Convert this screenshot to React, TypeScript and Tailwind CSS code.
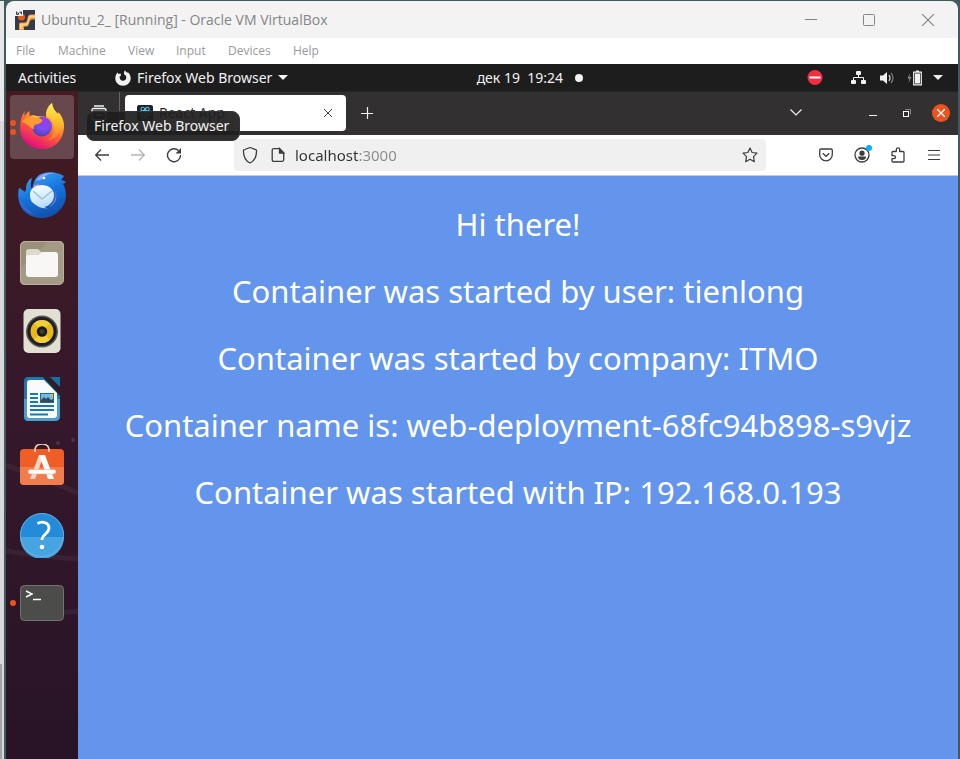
import type { ReactNode } from "react";

const menuItems = [
  { label: "File", width: "w-[42px]" },
  { label: "Machine", width: "w-[70px]" },
  { label: "View", width: "w-12" },
  { label: "Input", width: "w-[52px]" },
  { label: "Devices", width: "w-[65px]" },
  { label: "Help", width: "w-12" },
];

const messages = [
  "Hi there!",
  "Container was started by user: tienlong",
  "Container was started by company: ITMO",
  "Container name is: web-deployment-68fc94b898-s9vjz",
  "Container was started with IP: 192.168.0.193",
];

function IconButton({ label, className = "", children }: { label: string; className?: string; children: ReactNode }) {
  return (
    <button type="button" aria-label={label} className={`flex shrink-0 items-center justify-center ${className}`}>
      {children}
    </button>
  );
}

function VirtualBoxIcon() {
  return (
    <svg width="20" height="20" viewBox="0 0 20 20">
      <rect width="20" height="20" fill="#343a48" />
      <circle cx="6.500" cy="7" r="3.500" fill="#e65a1c" />
      <path d="M4 20V14q0-1.500 1.500-1.500H10q1.500 0 2-2l1-4q.500-2 2.500-2H20v5h-3q-1.500 0-2 1.500l-1.500 4q-.500 1.500-2 1.500H10q-1 0-1 1V20z" fill="#f29a3a" />
      <path d="M5 19v-4.500q0-1 1-1h4.500q1.500 0 2-2l1-4q.500-2 2-2H20v2h-3.500q-1.500 0-2 1.500l-1.500 5q-.500 1.500-2 1.500H9q-1.500 0-1.500 1.500V19z" fill="#ffd48a" />
      <rect width="8" height="6" fill="#f4f4f4" />
      <path d="M1.500 1.500v3h2v-1.500h-2M5 1.500v1.500h1.500M6.500 1.500v3" stroke="#444" fill="none" />
    </svg>
  );
}

function FirefoxSymbol() {
  return (
    <svg width="16" height="16" viewBox="0 0 16 16">
      <path d="M2.500 2.500 3.500 4l2-.5.5 2-1.500 1.200C4.500 9 6 10.800 8 10.800s3.300-1.300 3.300-3.200c0-1.300-.6-2.300-1.700-2.800C8.500 4 9 1.500 10 .3c.5 1.200 1.500 1.700 2.300 2.600l.4-1C14.500 3.500 15.700 5.500 15.700 8.200c0 4.300-3.400 7.500-7.700 7.500S.3 12.500.3 8.200c0-2.500 1-4.200 2.200-5.700z" fill="#f2f2f2" />
    </svg>
  );
}

function Caret() {
  return (
    <svg width="10" height="5" viewBox="0 0 10 5">
      <path d="M0 0h10L5 5z" fill="#f2f2f2" />
    </svg>
  );
}

function FirefoxLogo() {
  return (
    <svg width="48" height="48" viewBox="0 0 48 48">
      <defs>
        <linearGradient id="ffBody" x1="0.8" y1="0" x2="0.3" y2="1">
          <stop offset="0" stopColor="#fff04f" />
          <stop offset="0.3" stopColor="#ffb62e" />
          <stop offset="0.6" stopColor="#ff5a36" />
          <stop offset="0.95" stopColor="#e4117c" />
        </linearGradient>
        <radialGradient id="ffGlobe" cx="0.6" cy="0.25" r="0.8">
          <stop offset="0" stopColor="#a238e8" />
          <stop offset="0.5" stopColor="#7a4df0" />
          <stop offset="1" stopColor="#4c3fae" />
        </radialGradient>
        <linearGradient id="ffTail" x1="0" y1="0" x2="0" y2="1">
          <stop offset="0" stopColor="#fff25a" />
          <stop offset="0.5" stopColor="#ffc02c" />
          <stop offset="1" stopColor="#ff7a2a" />
        </linearGradient>
      </defs>
      <path d="M7 8c-1 3-.5 4-.5 5 1.500-2 3-4 5-5-.4 2 0 4 .5 5 2-.5 4-.3 6 0 4 0 8 0 10 1 0-6 2-10 6-14 .5 5 3 8 6 11l.5-2c4 5 6 10 5.500 16C45 38 36 46 24.500 46S3 38 2.200 27C1.800 20 3 13 7 8z" fill="url(#ffBody)" />
      <path d="M34 0c-3 2-6 6-6 12 5 3 8 7 8 13 0 6-3 9-6 12 8-1 13-7 14-14 .5-5-1-9-3-11-3-3-6.500-6-7-12z" fill="url(#ffTail)" opacity="0.85" />
      <circle cx="24" cy="23.500" r="10" fill="url(#ffGlobe)" />
      <path d="M3.500 19c4-5 9-7 15-6 2 0 3 3 6 4-.5 3-4 4-7 4.500-2 1-2 3-1.500 5C11 24 9 20 3.500 19z" fill="#ff9a2e" />
      <path d="M12.500 13c4-1 7 0 9 2-3-.5-5-1-9-2z" fill="#ffd23e" />
    </svg>
  );
}

function ThunderbirdLogo() {
  return (
    <svg width="48" height="48" viewBox="0 0 48 48">
      <defs>
        <linearGradient id="tbBody" x1="0.2" y1="0" x2="0.6" y2="1">
          <stop offset="0" stopColor="#3ba5f2" />
          <stop offset="0.5" stopColor="#1573dc" />
          <stop offset="1" stopColor="#1050ac" />
        </linearGradient>
        <linearGradient id="tbMail" x1="0" y1="0" x2="0.3" y2="1">
          <stop offset="0" stopColor="#ffffff" />
          <stop offset="1" stopColor="#b9dffa" />
        </linearGradient>
      </defs>
      <path d="M14 18c-2-3-1-7 0-11-4 2-6 6-6 11l-1 3c-2-1-3-3-6-4-1 4-1 8-.5 11C2 40 12 47 24 47s23-9 24-22c0-5-1-9-3-12 1-1 2-1 3-1-1-2-3-3-5-3 1-1 2-2 3-4-9-5-22-5-27 1-3 3-4 8-5 12z" fill="url(#tbBody)" />
      <path d="M18 10C21 3 30 1 38 2c-7 0-12 3-13 6z" fill="#9aa5ff" />
      <path d="M16 14c2 0 4-1 5-2l-1 4-5 3z" fill="#9f88e8" />
      <circle cx="26" cy="7" r="1.300" fill="#fff" />
      <path d="M12 24c0-7 6-10 12-10s12 4 12 10c0 7-5 11-10 12 2 1 3 1 4 1-5 1-10-1-12-3-4-2-6-5-6-10z" fill="url(#tbMail)" />
      <path d="m15 20 9 8 10-8" fill="none" stroke="#9fc0da" strokeWidth="1.600" />
      <path d="M37 20c2 7-1 12-6 16 7-3 9-10 6-16z" fill="#8b81e2" />
      <path d="M1 25c1 10 8 17 17 19C9 40 3 34 1 25z" fill="#6a62c8" />
    </svg>
  );
}

function FilesLogo() {
  return (
    <svg width="46" height="46" viewBox="0 0 46 46">
      <rect x="1" y="1" width="44" height="44" rx="5" fill="#999079" />
      <path d="M1 29 30 1h10c3 0 5 2 5 5v29c0 7-3 10-8 10H6c-3 0-5-2-5-5z" fill="#a49b86" />
      <rect x="1.500" y="1.500" width="43" height="43" rx="5" fill="none" stroke="#bab29d" />
      <path d="M7 12q0-3 3-3h8q2 0 3 2l2 2v9H7z" fill="#ded8cd" />
      <path d="M7 18q0-3 3-3h9q1 0 2-1l2-2h13q3 0 3 3v19q0 3-3 3H10q-3 0-3-3z" fill="#f8f7f6" />
    </svg>
  );
}

function RhythmboxLogo() {
  return (
    <svg width="40" height="46" viewBox="0 0 40 46">
      <rect x="1.500" y="1" width="37" height="44" rx="5" fill="#e2dfd3" />
      <circle cx="20" cy="23.500" r="16" fill="#58564f" />
      <circle cx="20" cy="23.500" r="14.500" fill="#1b1f2b" />
      <circle cx="20" cy="23.500" r="11.500" fill="#e8b818" />
      <path d="M20 23.500 12 15.200a11.500 11.500 0 0 1 16 0zM20 23.500l-8 8.300a11.500 11.500 0 0 0 16 0z" fill="#f8d94c" opacity="0.7" />
      <circle cx="20" cy="23.500" r="5.200" fill="#191919" />
      <circle cx="20" cy="23.500" r="2.500" fill="#3b3b3b" />
    </svg>
  );
}

function WriterLogo() {
  return (
    <svg width="40" height="46" viewBox="0 0 40 46">
      <path d="M6 1h15l17 17v22q0 5-5 5H6q-4 0-4-5V6q0-5 4-5z" fill="#1e78ab" />
      <path d="M2 23h36v17q0 5-5 5H6q-4 0-4-5z" fill="#48a0cc" />
      <path d="M28 1h10v10z" fill="#15709f" />
      <path d="M21 1h4l13 14v5z" fill="#24242c" />
      <path d="M8 4h14l13 13v22q0 3-3 3H8q-3 0-3-3V7q0-3 3-3z" fill="#fafafa" />
      <path d="M8 18h8M8 22h8M8 26h8M8 30h24M8 34h24M8 38.500h18" stroke="#177aaf" strokeWidth="2" />
      <rect x="18" y="17" width="14" height="10" fill="#176d9d" />
      <rect x="19" y="18" width="12" height="8" fill="#72bbe5" />
      <path d="M19 26v-2l3-3 2 2 2-2 3 3 2-1v3z" fill="#384750" />
      <path d="M28 18h3v4z" fill="#efc230" />
    </svg>
  );
}

function SoftwareLogo() {
  return (
    <svg width="46" height="46" viewBox="0 0 46 46">
      <path d="M1 9q0-4 4-4h36q4 0 4 4v28q0 4-4 4H5q-4 0-4-4z" fill="#f05e27" />
      <path d="M1 23h44v14q0 4-4 4H5q-4 0-4-4z" fill="#f27d4c" />
      <path d="M16 8V5q1-5 7-5t7 5v3" fill="none" stroke="#efd7b5" strokeWidth="1.600" />
      <path d="m20 11-9 24h5l9-24z" fill="#f9d6c6" />
      <path d="m20 11 9 24h6l-9-24z" fill="#fff" />
      <rect x="9" y="25.500" width="28" height="4.500" rx="2.200" fill="#fff" stroke="#f29a76" strokeWidth="0.500" />
    </svg>
  );
}

function HelpLogo() {
  return (
    <svg width="46" height="46" viewBox="0 0 46 46">
      <circle cx="23" cy="23" r="22" fill="#238bd8" />
      <path d="M1 25h44a22 22 0 0 1-44 0z" fill="#46a4e1" />
      <circle cx="23" cy="23" r="21.500" fill="none" stroke="#6bb8ea" strokeWidth="0.800" />
      <path d="M18.500 11.500C24 8.500 30 11 30 16c0 6-7 6-7 12" fill="none" stroke="#fff" strokeWidth="2.800" />
      <circle cx="23" cy="35" r="2.300" fill="#fff" />
    </svg>
  );
}

function TerminalLogo() {
  return (
    <svg width="46" height="38" viewBox="0 0 46 38">
      <rect x="1.500" y="1.500" width="43" height="35" rx="4" fill="#4c4c4b" stroke="#73736f" />
      <path d="m7 7 6 3-6 3" fill="none" stroke="#fff" strokeWidth="1.500" />
      <path d="M14 15.500h8" stroke="#fff" strokeWidth="1.500" />
    </svg>
  );
}

const dockItems = [
  { name: "Firefox Web Browser", icon: <FirefoxLogo />, windows: 2, active: true },
  { name: "Thunderbird Mail", icon: <ThunderbirdLogo />, windows: 0, active: false },
  { name: "Files", icon: <FilesLogo />, windows: 0, active: false },
  { name: "Rhythmbox", icon: <RhythmboxLogo />, windows: 0, active: false },
  { name: "LibreOffice Writer", icon: <WriterLogo />, windows: 0, active: false },
  { name: "Ubuntu Software", icon: <SoftwareLogo />, windows: 0, active: false },
  { name: "Help", icon: <HelpLogo />, windows: 0, active: false },
  { name: "Terminal", icon: <TerminalLogo />, windows: 1, active: false },
];

function TitleBar() {
  return (
    <header className="flex h-[37px] items-center bg-[#f3f3f3] pl-[9px]">
      <VirtualBoxIcon />
      <h1 className="ml-1.5 font-['Open_Sans',sans-serif] text-sm text-[#858585]">Ubuntu_2_ [Running] - Oracle VM VirtualBox</h1>
      <div className="ml-auto flex text-[#858585]">
        <IconButton label="Minimize" className="h-9 w-[58px]">
          <svg width="12" height="12" viewBox="0 0 12 12"><path d="M0 5.500h12" stroke="currentColor" /></svg>
        </IconButton>
        <IconButton label="Maximize" className="h-9 w-[58px]">
          <svg width="12" height="12" viewBox="0 0 12 12"><rect x="0.500" y="0.500" width="11" height="11" rx="1" fill="none" stroke="currentColor" /></svg>
        </IconButton>
        <IconButton label="Close" className="h-9 w-[60px]">
          <svg width="12" height="12" viewBox="0 0 12 12"><path d="m0 0 12 12M12 0 0 12" stroke="currentColor" strokeWidth="1.200" /></svg>
        </IconButton>
      </div>
    </header>
  );
}

function MenuBar() {
  return (
    <nav className="flex h-[26px] items-center bg-white pl-2.5 font-['Open_Sans',sans-serif] text-xs text-[#9a9a9a]">
      {menuItems.map((item) => (
        <button key={item.label} type="button" className={`text-left ${item.width}`}>{item.label}</button>
      ))}
    </nav>
  );
}

function SystemBar() {
  return (
    <div className="flex h-[27px] items-center bg-[#1d1d1d] text-sm text-[#f2f2f2]">
      <div className="flex flex-1 items-center pl-3">
        <button type="button" className="w-[97px] text-left">Activities</button>
        <button type="button" className="flex items-center gap-1.5">
          <FirefoxSymbol />
          Firefox Web Browser
          <Caret />
        </button>
        <button type="button" className="ml-auto flex items-center gap-3">
          <span className="whitespace-pre">дек 19  19:24</span>
          <span className="size-2 rounded-full bg-[#f2f2f2]" />
        </button>
      </div>
      <div className="flex w-[375px] items-center justify-end pr-[15px]">
        <svg className="mr-7" width="16" height="16" viewBox="0 0 16 16"><circle cx="8" cy="7.500" r="7.500" fill="#f22c42" /><path d="M2.500 7.500h11" stroke="#fff" strokeWidth="2" /></svg>
        <svg className="mr-3" width="16" height="16" viewBox="0 0 16 16" fill="#f2f2f2"><rect x="5" y="1" width="5" height="4" rx="1" /><rect x="0" y="10" width="5" height="4" rx="1" /><rect x="10" y="10" width="5" height="4" rx="1" /><path d="M7.500 5v3M2.500 10V7.500h10V10" fill="none" stroke="#f2f2f2" /></svg>
        <svg className="mr-3" width="16" height="16" viewBox="0 0 16 16"><path d="M1 5.500h3L8 2v12l-4-3.500H1z" fill="#f2f2f2" /><path d="M10 5q2 3 0 6" fill="none" stroke="#d0d0d0" strokeWidth="1.300" /><path d="M12 3q4 5 0 10" fill="none" stroke="#777" strokeWidth="1.300" /></svg>
        <svg className="mr-2.5" width="16" height="16" viewBox="0 0 16 16"><path d="M3 3 .5 8.500H2.500L1.500 13 4.500 7H2.500z" fill="#8c8c8c" /><path d="M6.700 2.200h7.600v12.600H6.700zM9 1h3" fill="none" stroke="#f2f2f2" strokeWidth="1.200" /><path d="M8 3.500h5v10H8z" fill="#f2f2f2" /></svg>
        <Caret />
      </div>
    </div>
  );
}

function Dock() {
  return (
    <aside className="relative z-10 flex w-[72px] shrink-0 flex-col items-center gap-1 bg-linear-to-b from-[#431b20] via-[#36182b] via-45% to-[#281426] pt-1">
      <svg className="absolute top-[310px] left-0" width="72" height="230" viewBox="0 0 72 230" fill="none">
        <path d="M0 64q35 12 72 28M0 150q40 6 72 8M20 218q30-6 52-8" stroke="#ffffff" strokeOpacity="0.050" strokeWidth="5" />
        <circle cx="52" cy="42" r="2" fill="#fff" fillOpacity="0.120" />
        <circle cx="67" cy="39" r="2" fill="#fff" fillOpacity="0.120" />
      </svg>
      {dockItems.map((item) => (
        <button
          key={item.name}
          type="button"
          aria-label={item.name}
          className={`relative flex size-16 items-center justify-center rounded-[4px] ${item.active ? "bg-white/20" : ""}`}
        >
          {item.icon}
          <span className="absolute inset-y-0 left-0 flex flex-col justify-center gap-[3px]">
            {Array.from({ length: item.windows }, (_, i) => (
              <span key={i} className="size-1.5 rounded-full bg-[#e95420]" />
            ))}
          </span>
          {item.active && (
            <span role="tooltip" className="absolute top-4 left-[76px] rounded-lg border border-[#333] bg-[#1e1e1e]/93 py-1 pr-2.5 pl-[7px] text-sm leading-5 whitespace-nowrap text-[#f2f2f2]">
              {item.name}
            </span>
          )}
        </button>
      ))}
    </aside>
  );
}

function TabStrip() {
  return (
    <div className="flex h-11 items-center border-t border-[#262526] bg-[#323031] pb-[2px] text-[#f2f2f2]">
      <IconButton label="Recent browsing" className="h-full w-[42px] border-r border-[#666]">
        <svg width="16" height="16" viewBox="0 0 16 16" fill="none" stroke="currentColor" strokeWidth="1.300"><path d="M3 1h10M1 5q0-1.500 1.500-1.500h11Q15 3.500 15 5v8q0 2-2 2H3q-2 0-2-2zM1 6.500h14M5 10h6" /></svg>
      </IconButton>
      <div className="ml-[5px] flex h-9 w-[221px] items-center rounded-[4px] bg-white pl-3 text-[#2c2b2d]">
        <svg width="16" height="16" viewBox="0 0 16 16"><rect width="16" height="16" rx="2" fill="#20232a" /><g fill="none" stroke="#61dafb" strokeWidth="0.900"><ellipse cx="8" cy="8" rx="6.500" ry="2.500" /><ellipse cx="8" cy="8" rx="6.500" ry="2.500" transform="rotate(60 8 8)" /><ellipse cx="8" cy="8" rx="6.500" ry="2.500" transform="rotate(120 8 8)" /></g><circle cx="8" cy="8" r="1.200" fill="#61dafb" /></svg>
        <span className="ml-1.5 text-sm">React App</span>
        <IconButton label="Close tab" className="ml-auto h-7 w-9">
          <svg width="8" height="8" viewBox="0 0 8 8"><path d="m0 0 8 8M8 0 0 8" stroke="#444" /></svg>
        </IconButton>
      </div>
      <IconButton label="New tab" className="size-[42px]">
        <svg width="12" height="12" viewBox="0 0 12 12"><path d="M6.500 0v12M0 6.500h12" stroke="currentColor" strokeWidth="1.200" /></svg>
      </IconButton>
      <IconButton label="List all tabs" className="ml-auto w-9">
        <svg width="12" height="7" viewBox="0 0 12 7"><path d="m.5.5 5.500 5.500L11.500.5" fill="none" stroke="currentColor" strokeWidth="1.200" /></svg>
      </IconButton>
      <IconButton label="Minimize browser" className="ml-[42px] w-[34px]">
        <svg width="8" height="8" viewBox="0 0 8 8"><path d="M0 6.500h8" stroke="currentColor" /></svg>
      </IconButton>
      <IconButton label="Restore browser" className="w-[34px]">
        <svg width="8" height="8" viewBox="0 0 8 8" fill="none"><path d="M2.500.5h5v5" stroke="#8a8a8a" /><rect x="0.500" y="2.500" width="5" height="5" stroke="#fff" /></svg>
      </IconButton>
      <IconButton label="Close browser" className="mr-2 ml-2 size-[18px] rounded-full bg-[#e95420]">
        <svg width="8" height="8" viewBox="0 0 8 8"><path d="m0 0 8 8M8 0 0 8" stroke="#fff" strokeWidth="1.300" /></svg>
      </IconButton>
    </div>
  );
}

function NavigationBar() {
  return (
    <div className="flex h-[41px] items-center border-b border-[#c9c9c9] bg-white pr-1.5 pl-1.5 text-[#3d3c3f]">
      <IconButton label="Back" className="size-9">
        <svg width="14" height="12" viewBox="0 0 14 12" fill="none" stroke="currentColor" strokeWidth="1.300"><path d="M14 6H1M6 .5.700 6 6 11.500" /></svg>
      </IconButton>
      <IconButton label="Forward" className="size-9 text-[#b5b5b6]">
        <svg width="14" height="12" viewBox="0 0 14 12" fill="none" stroke="currentColor" strokeWidth="1.300"><path d="M0 6h13M8 .5 13.300 6 8 11.500" /></svg>
      </IconButton>
      <IconButton label="Reload" className="size-9">
        <svg width="16" height="16" viewBox="0 0 16 16" fill="none" stroke="currentColor" strokeWidth="1.400"><path d="M12.500 3.500A6.500 6.500 0 1 0 14.500 8" /><path d="M15 1v5.500H9.500z" fill="currentColor" stroke="none" /></svg>
      </IconButton>
      <div className="mr-[42px] ml-[42px] flex h-8 flex-1 items-center rounded-[4px] bg-[#f0f0f0] px-2">
        <svg className="shrink-0" width="16" height="18" viewBox="0 0 16 18" fill="none" stroke="currentColor" strokeWidth="1.300"><path d="M8 1.500 14.500 4c.3 6-1.500 10.500-6.500 13C3 14.500 1.200 10 1.500 4z" strokeLinejoin="round" /></svg>
        <svg className="ml-3 shrink-0" width="16" height="16" viewBox="0 0 16 16" fill="none" stroke="currentColor" strokeWidth="1.300"><path d="M3.500 1.700h6L13.700 6v6.800q0 1.500-1.500 1.500H3.700q-1.500 0-1.500-1.500V3.200q0-1.500 1.300-1.500z" /><path d="M9.500 1.500V6h4.300z" fill="currentColor" /></svg>
        <input
          aria-label="Address"
          defaultValue="localhost:3000"
          className="ml-[9px] h-6 min-w-0 flex-1 bg-linear-to-r from-[#323234] from-[64px] to-[#8a8a8b] to-[64px] bg-clip-text text-[15px] text-transparent outline-none"
        />
        <button type="button" aria-label="Bookmark this page">
          <svg width="16" height="16" viewBox="0 0 16 16" fill="none" stroke="currentColor" strokeWidth="1.200" strokeLinejoin="round"><path d="m8 1 2.100 4.500 4.900.7-3.500 3.500.8 5L8 12.300l-4.300 2.400.8-5L1 6.200l4.900-.7z" /></svg>
        </button>
      </div>
      <IconButton label="Save to Pocket" className="size-9">
        <svg width="16" height="16" viewBox="0 0 16 16" fill="none" stroke="currentColor" strokeWidth="1.300"><path d="M3 2h10q1.300 0 1.300 1.300V7.500a6.300 6.300 0 0 1-12.600 0V3.300Q1.700 2 3 2z" /><path d="m4.800 6.300 3.200 3 3.200-3" /></svg>
      </IconButton>
      <IconButton label="Account" className="relative size-9">
        <svg width="16" height="16" viewBox="0 0 16 16"><circle cx="8" cy="8" r="7" fill="none" stroke="currentColor" strokeWidth="1.300" /><circle cx="8" cy="6.200" r="2.600" fill="currentColor" /><path d="M4 9.500h8q0 3.500-4 3.500t-4-3.500z" fill="currentColor" /></svg>
        <span className="absolute top-2 right-2 size-1.5 rounded-full bg-[#00b0ff]" />
      </IconButton>
      <IconButton label="Extensions" className="size-9">
        <svg width="16" height="16" viewBox="0 0 16 16" fill="none" stroke="currentColor" strokeWidth="1.300" strokeLinejoin="round"><path d="M2 5.500q0-1 1-1h3.300V2.500Q6.500.8 8 .8t1.700 1.700v2H13q1 0 1 1V14q0 1-1 1H3q-1 0-1-1v-2.300h2q1.500-.2 1.500-1.500T4 8.700H2z" /></svg>
      </IconButton>
      <IconButton label="Open application menu" className="size-9">
        <svg width="12" height="10" viewBox="0 0 12 10"><path d="M0 .5h12M0 5h12M0 9.500h12" stroke="currentColor" strokeWidth="1.200" /></svg>
      </IconButton>
    </div>
  );
}

export default function App() {
  return (
    <div className="flex min-h-screen flex-col bg-[#42595f] font-['Noto_Sans',sans-serif]">
      <div className="flex flex-1 pt-px">
        <div className="flex w-1 shrink-0 flex-col">
          <div className="h-[120px] bg-[#e6e7e9]" />
          <div className="flex-1 bg-[#d8d9da]" />
          <div className="h-[95px] w-0.5 bg-[#a3a3a3] shadow-[2px_0_0_#d8d9da]" />
        </div>
        <main className="mr-0.5 ml-0.5 flex min-w-0 flex-1 flex-col overflow-hidden rounded-t-lg">
          <TitleBar />
          <MenuBar />
          <SystemBar />
          <div className="flex flex-1">
            <Dock />
            <section className="flex min-w-0 flex-1 flex-col bg-[#6495ed]">
              <TabStrip />
              <NavigationBar />
              <article className="flex flex-col gap-[27px] pt-7 text-center text-[31px] leading-10 text-white">
                {messages.map((message) => (
                  <p key={message}>{message}</p>
                ))}
              </article>
            </section>
          </div>
        </main>
      </div>
    </div>
  );
}
